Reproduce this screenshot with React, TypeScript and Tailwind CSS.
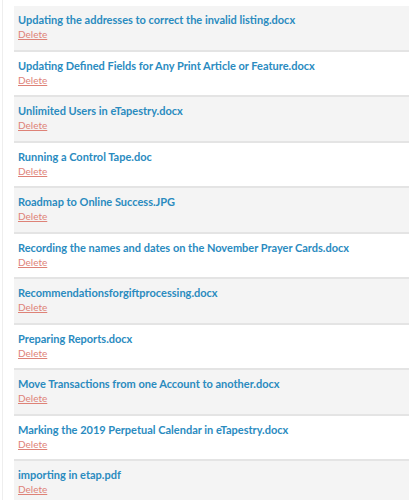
import React from 'react';

const files = [
  'Updating the addresses to correct the invalid listing.docx',
  'Updating Defined Fields for Any Print Article or Feature.docx',
  'Unlimited Users in eTapestry.docx',
  'Running a Control Tape.doc',
  'Roadmap to Online Success.JPG',
  'Recording the names and dates on the November Prayer Cards.docx',
  'Recommendationsforgiftprocessing.docx',
  'Preparing Reports.docx',
  'Move Transactions from one Account to another.docx',
  'Marking the 2019 Perpetual Calendar in eTapestry.docx',
  'importing in etap.pdf',
];

const App: React.FC = () => {
  return (
    <div className="min-h-[500px] bg-white font-['Lato','Open_Sans',sans-serif]">
      <div className="ml-[2px] min-h-[500px] border-l border-[#eeeeee] pl-[11px] pt-[6px]">
        <ul>
          {files.map((name, i) => (
            <li
              key={name}
              className={`h-[45.5px] border-b-2 border-[#e4e4e4] px-[4px] pt-[7px] leading-none ${i % 2 === 0 ? 'bg-[#f4f4f4]' : 'bg-white'}`}
            >
              <a href="#" className="block text-[11px] leading-[14px] font-bold text-[#2a8bbf] whitespace-nowrap">
                {name}
              </a>
              <a href="#" className="mt-[1px] block w-fit text-[10px] leading-[12px] text-[#de8277] underline">
                Delete
              </a>
            </li>
          ))}
        </ul>
      </div>
    </div>
  );
};

export default App;
